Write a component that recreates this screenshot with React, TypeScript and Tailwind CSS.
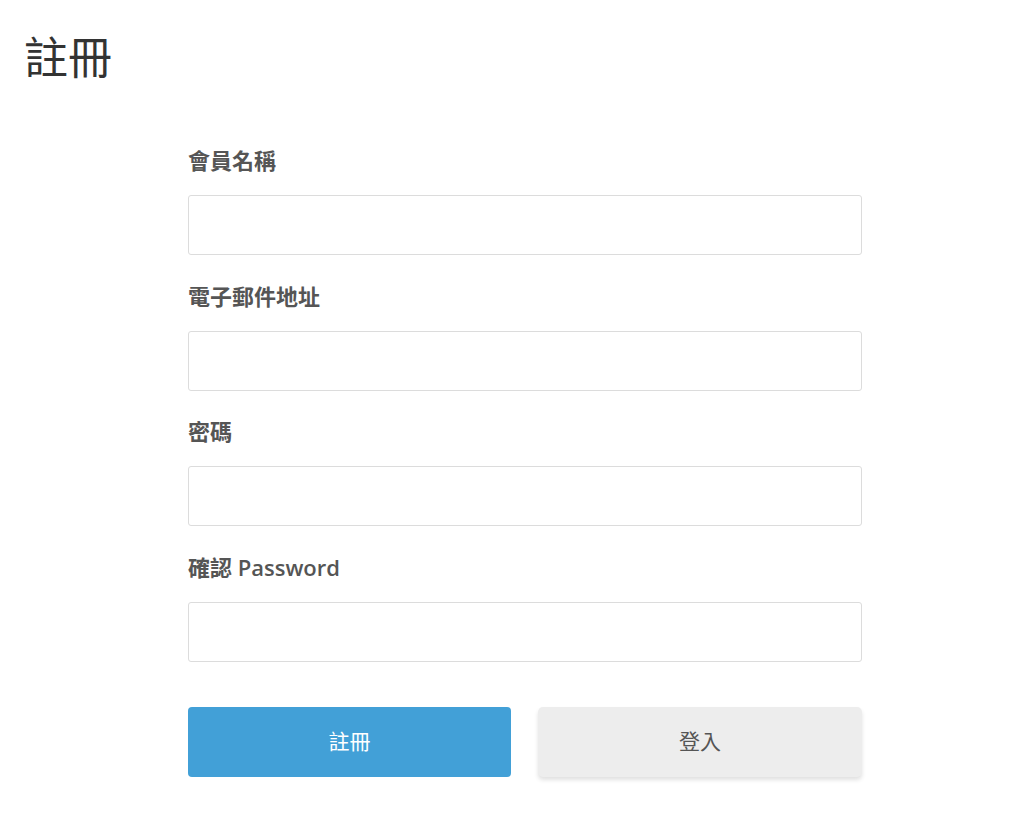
import React from 'react';

const fields = ['會員名稱', '電子郵件地址', '密碼', '確認 Password'];

const App: React.FC = () => {
  return (
    <div
      className="min-h-screen w-full bg-white text-[#333]"
      style={{ fontFamily: '"Open Sans", "Noto Sans CJK TC", sans-serif' }}
    >
      <h1 className="pl-[24px] pt-[30px] text-[44px] leading-[54px] font-normal text-[#333]">註冊</h1>

      <form className="ml-[188px] w-[674px] pt-[61px]" onSubmit={e => e.preventDefault()}>
        {fields.map((label, i) => (
          <div key={label} className={i === 0 ? '' : 'mt-[25.7px]'}>
            <label className="block text-[22px] leading-[30px] font-semibold text-[#555]">{label}</label>
            <input
              type={i >= 2 ? 'password' : 'text'}
              className="mt-[20px] block h-[60px] w-full rounded-[3px] border border-[#dcdcdc] bg-white px-3 outline-none"
            />
          </div>
        ))}

        <div className="mt-[45px] flex gap-[27px]">
          <button
            type="submit"
            className="h-[70px] w-[323px] rounded-[4px] bg-[#42a0d7] text-[21px] font-normal text-white"
          >
            註冊
          </button>
          <button
            type="button"
            className="h-[70px] w-[324px] rounded-[5px] bg-[#ededed] text-[21px] font-normal text-[#555] shadow-[0_3px_4px_rgba(0,0,0,0.12)]"
          >
            登入
          </button>
        </div>
      </form>
    </div>
  );
};

export default App;
